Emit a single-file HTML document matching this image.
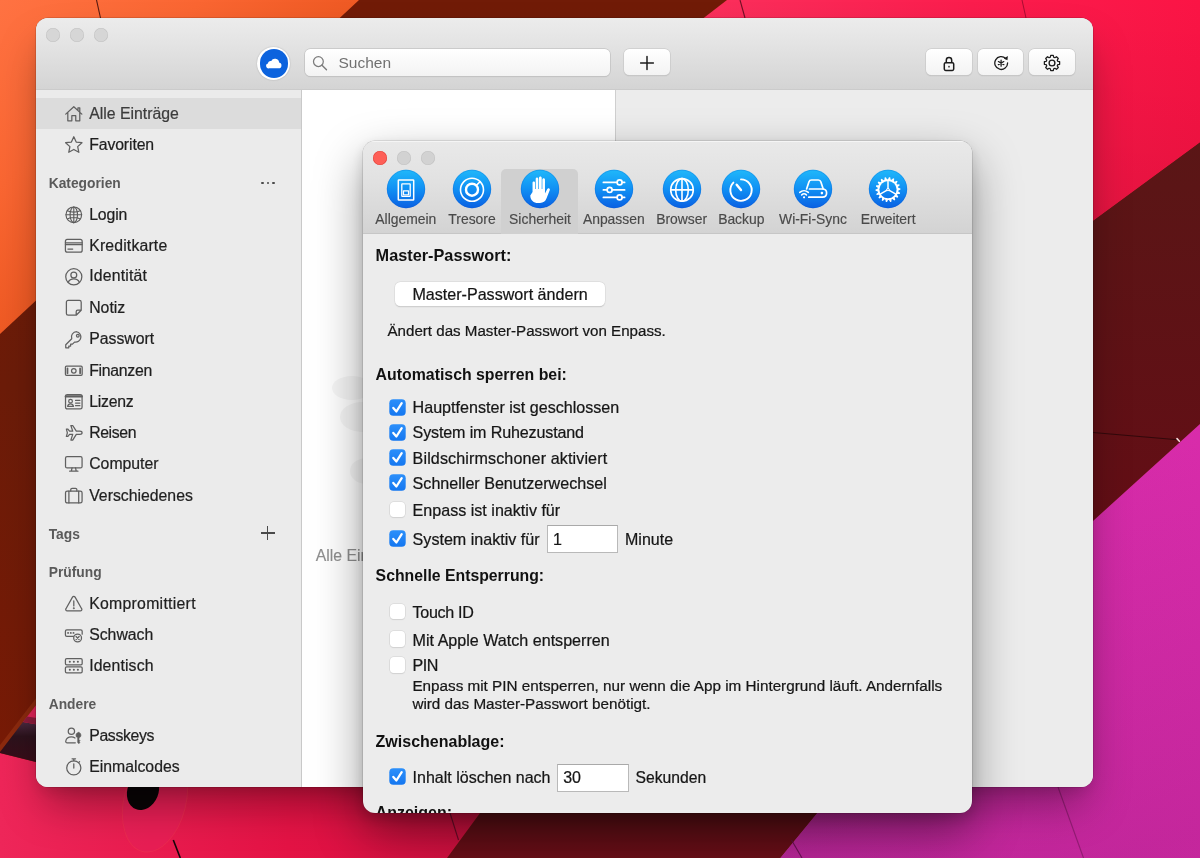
<!DOCTYPE html>
<html lang="de">
<head>
<meta charset="utf-8">
<title>Enpass – Einstellungen</title>
<style>
*{box-sizing:border-box;margin:0;padding:0}
html,body{width:1200px;height:858px;overflow:hidden;background:#6e1b09}
body{font-family:"Liberation Sans",sans-serif;position:relative;color:#1d1d1d;-webkit-font-smoothing:antialiased}
#main,#dlg{will-change:transform}
#wall{position:absolute;left:0;top:0;width:1200px;height:858px;display:block}
.abs{position:absolute}
/* ---------- main window ---------- */
#main{position:absolute;left:36px;top:18px;width:1057px;height:769px;border-radius:12px;background:#ececec;
 box-shadow:0 0 0 0.5px rgba(0,0,0,.24),0 24px 44px -8px rgba(0,0,0,.36),0 8px 16px -4px rgba(0,0,0,.12);overflow:hidden}
#main .tbar{position:absolute;left:0;top:0;width:100%;height:72px;background:linear-gradient(#ececec,#e4e4e4 35%,#d4d4d4);border-bottom:1px solid #cbcbcb}
.tl{position:absolute;width:14.4px;height:14.4px;border-radius:50%;background:#d6d6d6;box-shadow:inset 0 0 0 .5px #c2c2c2}
#side{position:absolute;left:0;top:72px;width:264.5px;height:700px;background:#ebebeb}
#list{position:absolute;left:265.5px;top:72px;width:313.5px;height:700px;background:#fff}
#vsep1{position:absolute;left:264.5px;top:72px;width:1px;height:700px;background:#c9c9c9}
#vsep2{position:absolute;left:579px;top:72px;width:1px;height:700px;background:#cfcfcf}
#detail{position:absolute;left:580px;top:72px;width:477px;height:700px;background:#ececec}


/* main toolbar widgets */
.cloud{position:absolute;left:221.4px;top:29.2px;width:33px;height:33px;border-radius:50%;background:#fff;box-shadow:0 0 1.5px rgba(0,0,0,.25)}
.cloud:before{content:"";position:absolute;left:2.3px;top:2.3px;width:28.4px;height:28.4px;border-radius:50%;background:#0c63de}
.cloud svg{position:absolute;left:0;top:0;width:33px;height:33px}
.search{position:absolute;left:268.6px;top:30.5px;width:305.4px;height:27.7px;border-radius:5.5px;background:linear-gradient(#ffffff,#f3f3f3);box-shadow:0 0 0 .8px #c4c4c4,0 1px 1px rgba(0,0,0,.12)}
.search svg{position:absolute;left:7.5px;top:6.5px;width:17px;height:17px}
.search span{position:absolute;left:33.9px;top:.6px;line-height:27.6px;font-size:15.5px;color:#707070}
.tbtn{position:absolute;top:30.8px;height:26.7px;width:45.6px;border-radius:5.5px;background:linear-gradient(#ffffff,#f3f3f3);box-shadow:0 0 0 .7px #cbcbcb,0 1px 1.2px rgba(0,0,0,.16)}
.tbtn svg{position:absolute;left:50%;top:50%;width:20px;height:20px;margin:-9.100px 0 0 -10px;overflow:visible}

.ph{position:absolute;border-radius:50%;background:#f6f6f6}
.emp{position:absolute;left:14.2px;top:456px;height:20px;line-height:20px;font-size:15.8px;color:#8f8f8f;white-space:nowrap;-webkit-text-stroke:.15px #8f8f8f}
/* sidebar rows */
.row{position:absolute;left:0;width:264.5px;height:31px;line-height:31px;font-size:15.8px;color:#1f1f1f;white-space:nowrap;-webkit-text-stroke:.22px #1f1f1f}
.row.sel{background:#dcdcdc;color:#3c3c3c;-webkit-text-stroke-color:#3c3c3c}
.row .ic{position:absolute;left:27.9px;top:6.1px;width:19.6px;height:19.6px;overflow:visible}
.row span{position:absolute;left:53.2px;top:.7px}
.hdr{position:absolute;left:12.7px;width:240px;height:20px;line-height:20px;font-size:13.8px;font-weight:bold;color:#5a5a5a;white-space:nowrap}
.dots{position:absolute;left:212.5px;top:7.5px;width:16px;height:3px}
.dots b{display:block;position:absolute;top:0;width:2.6px;height:2.6px;border-radius:50%;background:#4a4a4a}
.dots b:nth-child(1){left:0}.dots b:nth-child(2){left:5.4px}.dots b:nth-child(3){left:10.8px}
.plus{position:absolute;left:212px;top:.9px;width:14px;height:14px}
.plus:before{content:"";position:absolute;left:0;top:6.4px;width:14px;height:1.2px;background:#4a4a4a}
.plus:after{content:"";position:absolute;left:6.4px;top:0;width:1.2px;height:14px;background:#4a4a4a}
/* ---------- dialog ---------- */
#dlg{position:absolute;left:363px;top:141px;width:609px;height:672px;border-radius:12px;background:#ececec;
 box-shadow:0 0 0 0.5px rgba(0,0,0,.2),0 20px 48px rgba(0,0,0,.40),0 5px 14px rgba(0,0,0,.14);overflow:hidden}
#dlg .tbar{position:absolute;left:0;top:0;width:100%;height:93px;background:linear-gradient(#e9e9e9,#e2e2e2 40%,#d3d3d3);border-bottom:1px solid #c6c6c6;box-shadow:inset 0 1px 0 rgba(255,255,255,.55)}

.tabsel{position:absolute;left:138px;top:28.2px;width:76.6px;height:65.3px;background:#d0d0d0;border-radius:5px 5px 0 0}
.dtl{position:absolute;top:9.5px;width:14px;height:14px;border-radius:50%}
.tic{position:absolute;top:28.4px;width:40px;height:40px;overflow:visible}
.tlab{position:absolute;top:69.9px;width:100px;height:16px;line-height:16px;text-align:center;font-size:13.9px;color:#4a4a4a;white-space:nowrap;-webkit-text-stroke:.15px #4a4a4a}
.h{position:absolute;left:12.6px;height:20px;line-height:20px;font-weight:bold;color:#111;white-space:nowrap}
.t{position:absolute;height:20px;line-height:20px;color:#161616;white-space:nowrap;-webkit-text-stroke:.22px #161616}
.cb{position:absolute;left:26px;width:17px;height:17px}
.cbo{position:absolute;left:26.6px;width:15.8px;height:15.8px;border-radius:3.8px;background:#fff;box-shadow:0 0 0 .6px #d3d3d3,0 .5px 1px rgba(0,0,0,.12)}
.btn{position:absolute;border-radius:5.5px;background:#fff;box-shadow:0 0 0 .5px #d9d9d9,0 .6px 1.2px rgba(0,0,0,.2)}
.inp{position:absolute;background:#fff;border:1px solid #b9b9b9;border-top-color:#a9a9a9}
</style>
</head>
<body>
<svg id="wall" viewBox="0 0 1200 858" preserveAspectRatio="none">
 <defs>
  <linearGradient id="gOr" x1="0" y1="0" x2="1" y2="1" gradientUnits="objectBoundingBox">
   <stop offset="0" stop-color="#ff7242"/><stop offset=".28" stop-color="#fa6632"/><stop offset=".5" stop-color="#ef5a24"/><stop offset="1" stop-color="#e8521e"/>
  </linearGradient>
  <linearGradient id="gBr" x1="0" y1="0" x2="0" y2="1">
   <stop offset="0" stop-color="#711b07"/><stop offset=".45" stop-color="#6c1c09"/><stop offset="1" stop-color="#7b1a05"/>
  </linearGradient>
  <linearGradient id="gPk" x1="0" y1="0" x2="1" y2="0">
   <stop offset="0" stop-color="#fb305d"/><stop offset=".55" stop-color="#fb1d4d"/><stop offset="1" stop-color="#fb1445"/>
  </linearGradient>
  <linearGradient id="gMr" x1="0" y1="0" x2="0" y2="1">
   <stop offset="0" stop-color="#5a1616"/><stop offset="1" stop-color="#650c15"/>
  </linearGradient>
  <linearGradient id="gMg" x1="0" y1="0" x2="1" y2="0">
   <stop offset="0" stop-color="#c32aa0"/><stop offset=".5" stop-color="#d22ba6"/><stop offset="1" stop-color="#d92cab"/>
  </linearGradient>
  <linearGradient id="gBm" x1="0" y1="0" x2="0" y2="1">
   <stop offset="0" stop-color="#4c0f11"/><stop offset="1" stop-color="#6a0f18"/>
  </linearGradient>
  <linearGradient id="gBp" x1="0" y1="0" x2="1" y2="0">
   <stop offset="0" stop-color="#ee2659"/><stop offset=".6" stop-color="#e41345"/><stop offset="1" stop-color="#d01040"/>
  </linearGradient>
  <linearGradient id="gIc" x1="0" y1="0" x2="0" y2="1"><stop offset="0" stop-color="#20b8fa"/><stop offset=".5" stop-color="#1090f4"/><stop offset="1" stop-color="#0a60e2"/></linearGradient>
  <linearGradient id="gCb" x1="0" y1="0" x2="0" y2="1"><stop offset="0" stop-color="#2c8ffa"/><stop offset="1" stop-color="#1577f0"/></linearGradient>
  <linearGradient id="gDk" x1="0" y1="0" x2="0" y2="1"><stop offset="0" stop-color="#4a2a40"/><stop offset=".35" stop-color="#2c121c"/><stop offset="1" stop-color="#3a0c18"/></linearGradient>
  <linearGradient id="gIc2" x1="0" y1="0" x2="0" y2="1"><stop offset="0" stop-color="#18a3f6"/><stop offset=".6" stop-color="#0f88f2"/><stop offset="1" stop-color="#0d74ea"/></linearGradient>
  <linearGradient id="gPkV" gradientUnits="userSpaceOnUse" x1="0" y1="0" x2="0" y2="230"><stop offset="0" stop-color="#70001a" stop-opacity="0"/><stop offset="1" stop-color="#70001a" stop-opacity=".17"/></linearGradient>
  <linearGradient id="gMgV" gradientUnits="userSpaceOnUse" x1="1000" y1="480" x2="1120" y2="858"><stop offset="0" stop-color="#5a0a50" stop-opacity="0"/><stop offset="1" stop-color="#5a0a50" stop-opacity=".16"/></linearGradient>
 </defs>
 <rect width="1200" height="858" fill="url(#gBr)"/>
 <!-- orange -->
 <polygon points="0,0 359,0 0,334" fill="url(#gOr)"/>
 <!-- top pink -->
 <polygon points="727,0 1200,0 1200,142.5 1093,221 900,300 690,28.6" fill="url(#gPk)"/>
 <polygon points="727,0 1200,0 1200,142.5 1093,221 900,300 690,28.6" fill="url(#gPkV)"/>
 <!-- right maroon -->
 <polygon points="1093,221 1200,142.5 1200,424 1093,521 1000,600 1000,300" fill="url(#gMr)"/>
 <!-- magenta -->
 <polygon points="1200,424 1200,858 780,858 817,813 900,700 1093,521" fill="url(#gMg)"/>
 <polygon points="1200,424 1200,858 780,858 817,813 900,700 1093,521" fill="url(#gMgV)"/>
 <!-- bottom maroon -->
 <polygon points="480,813 447,858 780,858 817,813 850,770 500,770" fill="url(#gBm)"/>
 <!-- bottom-left pink -->
 <polygon points="0,753 40,763 40,780 480,780 480,813 447,858 0,858" fill="url(#gBp)"/>
 <!-- left band details -->
 <polygon points="0,745 40,693 40,700 0,752.500" fill="#8c2a0e"/>
 <polygon points="0,752 23,722 40,725 40,763 0,753" fill="url(#gDk)"/>
 <polygon points="40,700 40,725 23,722" fill="#e3245a"/>
 <polygon points="27,716.500 40,718.500 40,725 23,722" fill="#8e1c3c"/>
 <!-- disc + hole -->
 <ellipse cx="155" cy="801" rx="31" ry="52" transform="rotate(14 155 801)" fill="#e6205a" fill-opacity=".55" stroke="#f0364f" stroke-opacity=".5" stroke-width="1"/>
 <ellipse cx="143" cy="791" rx="15.500" ry="19.500" transform="rotate(22 143 791)" fill="#0a0406"/>
 <path d="M173.300 840 180.300 858" stroke="#16070a" stroke-width="1.600"/>
 <!-- seams -->
 <g stroke="#3a0d0a" stroke-width="1.100" fill="none" stroke-opacity=".85">
  <path d="M96.500 0 100.500 18"/><path d="M740 0 745 18" stroke="#5a0a1c"/><path d="M1022 0 1026 18" stroke="#8f0a2c" stroke-width=".9"/>
  <path d="M1090 432.200 1177.500 439.700" stroke="#2a0709"/>
  <path d="M450 813 458.500 840" stroke="#5a0a22"/><path d="M791.500 840 802 858" stroke="#5e0f4a"/><path d="M1058 787 1083.500 858" stroke="#8a1a6c"/>
 </g>
 <path d="M1177 438.600 1179.400 441.200" stroke="#f3d9dc" stroke-width="1.600" stroke-linecap="round"/>
</svg>

<div id="main">
 <div class="tbar"></div>
 <div class="tl" style="left:9.6px;top:10px"></div>
 <div class="tl" style="left:33.7px;top:10px"></div>
 <div class="tl" style="left:57.6px;top:10px"></div>

 <div class="cloud"><svg viewBox="0 0 33 33"><path fill="#fff" d="M12.300 21.300h9.300a2.900 2.900 0 0 0 .5-5.750 4.150 4.150 0 0 0-7.900-1.450 2.700 2.700 0 0 0-3.300 2.500 2.450 2.450 0 0 0 1.400 4.700z"/></svg></div>
 <div class="search"><svg viewBox="0 0 17 17"><circle cx="6.400" cy="6.600" r="4.900" fill="none" stroke="#7b7b7b" stroke-width="1.250"/><path d="M10 10.200l4.500 4.500" stroke="#7b7b7b" stroke-width="1.350" stroke-linecap="round"/></svg><span>Suchen</span></div>
 <div class="tbtn" style="left:588.4px"><svg viewBox="0 0 20 20"><path d="M10 3.600v12.800M3.600 10h12.800" stroke="#1c1c1c" stroke-width="1.500" stroke-linecap="round"/></svg></div>
 <div class="tbtn" style="left:890.2px"><svg viewBox="0 0 20 20"><g fill="none" stroke="#1c1c1c" stroke-width="1.500" stroke-linejoin="round"><rect x="5.300" y="9.700" width="9.400" height="7.700" rx="1.300"/><path d="M7.300 9.700V7.200a2.700 2.700 0 0 1 5.400 0v2.500"/></g><rect x="9.300" y="12.700" width="1.400" height="1.900" rx=".5" fill="#1c1c1c"/></svg></div>
 <div class="tbtn" style="left:941.9px"><svg viewBox="0 0 20 20"><g fill="none" stroke="#1c1c1c" stroke-width="1.300" stroke-linecap="round"><path d="M14.700 5.500A6.400 6.400 0 1 0 16.600 10"/><path d="M10.100 7v6.200M7.400 8.550l5.400 3.100M12.800 8.550l-5.400 3.100" stroke-width="1.250"/></g><path d="M16.900 3.100l-.500 4.100-3.600-1.700z" fill="#1c1c1c"/></svg></div>
 <div class="tbtn" style="left:993.4px"><svg viewBox="0 0 20 20"><g fill="none" stroke="#1c1c1c" stroke-width="1.350" stroke-linejoin="round"><path d="M8.600 2.400h2.800l.45 2.050 1.250.52 1.780-1.130 1.980 1.980-1.130 1.780.52 1.250 2.050.45v2.800l-2.050.45-.52 1.250 1.130 1.780-1.980 1.980-1.780-1.130-1.250.52-.45 2.050H8.600l-.45-2.050-1.250-.52-1.780 1.130-1.980-1.980 1.130-1.780-.52-1.250-2.050-.45V9.300l2.050-.45.52-1.250-1.130-1.780 1.980-1.980 1.780 1.130 1.250-.52z" transform="translate(10 10) scale(.92) translate(-10 -10.700)"/><circle cx="10" cy="10" r="2.900"/></g></svg></div>
 <div id="side"></div>
<!-- sidebar rows -->
<div class="row sel" style="top:79.9px"><svg class="ic" viewBox="0 0 18 18"><path stroke="#606060" stroke-width="1.15" fill="none" stroke-linecap="round" stroke-linejoin="round" d="M1.6 9.3 9 2.5l7.400 6.800M3.500 7.700v7.700h3.700v-4.700h3.600v4.700h3.700V7.700M12.800 5.900V3.500h1.700v4"/></svg><span style="top:-0.3px">Alle Einträge</span></div>
<div class="row" style="top:110.7px"><svg class="ic" viewBox="0 0 18 18"><path stroke="#606060" stroke-width="1.15" fill="none" stroke-linecap="round" stroke-linejoin="round" d="M9.00 1.60 11.20 6.47 16.51 7.06 12.57 10.66 13.64 15.89 9.00 13.25 4.36 15.89 5.43 10.66 1.49 7.06 6.80 6.47z"/></svg><span style="letter-spacing:-0.11px">Favoriten</span></div>
<div class="hdr" style="top:156.1px">Kategorien<i class="dots"><b></b><b></b><b></b></i></div>
<div class="row" style="top:180.7px"><svg class="ic" viewBox="0 0 18 18"><g stroke="#5c5c5c" stroke-width="1.05" fill="none" stroke-linecap="round" stroke-linejoin="round"><circle cx="9" cy="9" r="7.2"/><ellipse cx="9" cy="9" rx="3.4" ry="7.2"/><path d="M1.8 9h14.4M9 1.8v14.4M3.100 5.200c1.700.9 3.700 1.300 5.900 1.300s4.200-.4 5.900-1.300M3.100 12.800c1.700-.9 3.700-1.300 5.900-1.300s4.200.4 5.900 1.300"/></g></svg><span style="letter-spacing:-0.13px">Login</span></div>
<div class="row" style="top:211.8px"><svg class="ic" viewBox="0 0 18 18"><g stroke="#606060" stroke-width="1.15" fill="none" stroke-linecap="round" stroke-linejoin="round"><rect x="1.300" y="3.200" width="15.400" height="11.600" rx="1.800"/><path d="M1.300 6.300h15.400M1.300 7.900h15.400M3.600 12h4.400"/></g></svg><span style="letter-spacing:0.16px">Kreditkarte</span></div>
<div class="row" style="top:242.9px"><svg class="ic" viewBox="0 0 18 18"><g stroke="#606060" stroke-width="1.15" fill="none" stroke-linecap="round" stroke-linejoin="round"><circle cx="9" cy="9" r="7.400"/><circle cx="9" cy="7.300" r="2.700"/><path d="M3.900 14.100c.900-2.100 2.800-3.100 5.100-3.100s4.200 1 5.100 3.100"/></g></svg><span style="letter-spacing:0.19px;top:-1.3px">Identität</span></div>
<div class="row" style="top:274.3px"><svg class="ic" viewBox="0 0 18 18"><path stroke="#606060" stroke-width="1.15" fill="none" stroke-linecap="round" stroke-linejoin="round" d="M3.800 2.200h10.400a1.600 1.600 0 0 1 1.600 1.600v7.400l-4.600 4.600H3.800a1.600 1.600 0 0 1-1.600-1.600V3.800a1.600 1.600 0 0 1 1.600-1.600zM15.600 11.200h-3a1.400 1.400 0 0 0-1.400 1.400v3"/></svg><span style="top:-0.3px">Notiz</span></div>
<div class="row" style="top:305.5px"><svg class="ic" viewBox="0 0 18 18"><g stroke="#606060" stroke-width="1.15" fill="none" stroke-linecap="round" stroke-linejoin="round"><path d="M11.600 1.600a4.800 4.800 0 0 0-4.500 6.500L1.600 13.600v2.800h2.800v-1.700h1.700v-1.700h1.700l1.900-1.900a4.800 4.800 0 1 0 1.900-9.500z"/><circle cx="12.700" cy="5.300" r="1.250"/></g></svg><span style="top:-0.3px">Passwort</span></div>
<div class="row" style="top:336.7px"><svg class="ic" viewBox="0 0 18 18"><g stroke="#606060" stroke-width="1.15" fill="none" stroke-linecap="round" stroke-linejoin="round"><rect x="1.300" y="4.800" width="15.400" height="8.400" rx="1"/><circle cx="9" cy="9" r="2.100"/><path d="M3.200 6.700v4.600M14.800 6.700v4.600" stroke-width="1.600"/></g></svg><span style="letter-spacing:-0.27px">Finanzen</span></div>
<div class="row" style="top:367.9px"><svg class="ic" viewBox="0 0 18 18"><g stroke="#606060" stroke-width="1.15" fill="none" stroke-linecap="round" stroke-linejoin="round"><rect x="1.400" y="2.400" width="15.200" height="13.200" rx="1.600"/><path d="M1.600 4.100h14.800" stroke-width="2"/><circle cx="6" cy="8.400" r="1.700"/><path d="M3.300 13.200c.3-1.600 1.300-2.300 2.700-2.300s2.400.7 2.700 2.300zM10.600 7.800h4M10.600 10.200h4M10.600 12.600h4"/></g></svg><span style="letter-spacing:-0.23px;top:-0.3px">Lizenz</span></div>
<div class="row" style="top:399.2px"><svg class="ic" viewBox="0 0 18 18"><path stroke="#606060" stroke-width="1.15" fill="none" stroke-linecap="round" stroke-linejoin="round" d="M16.600 9c0 .9-.9 1.500-2.100 1.500h-3.200l-3.300 5.200H6.300l1.700-5.200H5.100l-1.500 1.800H2.200L3.100 9l-.9-3.300h1.400l1.500 1.800H8L6.300 2.300H8l3.300 5.200h3.200c1.200 0 2.100.6 2.100 1.500z"/></svg><span style="letter-spacing:-0.38px;top:-0.3px">Reisen</span></div>
<div class="row" style="top:430.4px"><svg class="ic" viewBox="0 0 18 18"><g stroke="#606060" stroke-width="1.15" fill="none" stroke-linecap="round" stroke-linejoin="round"><rect x="1.400" y="2.400" width="15.200" height="10.400" rx="1.400"/><path d="M7.400 12.800l-.6 2.800M10.600 12.800l.6 2.800M5.200 15.800h7.600"/></g></svg><span style="top:-0.3px">Computer</span></div>
<div class="row" style="top:461.7px"><svg class="ic" viewBox="0 0 18 18"><g stroke="#606060" stroke-width="1.15" fill="none" stroke-linecap="round" stroke-linejoin="round"><rect x="1.400" y="4.600" width="15.200" height="11" rx="1.600"/><path d="M6.200 4.600V3.300c0-.7.500-1.200 1.200-1.200h3.200c.7 0 1.200.5 1.200 1.200v1.300M4.500 4.600v11M13.500 4.600v11"/></g></svg><span>Verschiedenes</span></div>
<div class="hdr" style="top:507.2px">Tags<i class="plus"></i></div>
<div class="hdr" style="top:545.2px">Prüfung</div>
<div class="row" style="top:569.8px"><svg class="ic" viewBox="0 0 18 18"><g stroke="#606060" stroke-width="1.15" fill="none" stroke-linecap="round" stroke-linejoin="round"><path d="M9 2.100c.5 0 .9.300 1.200.8l6 10.600c.6 1-.1 2.100-1.200 2.100H3c-1.100 0-1.800-1.100-1.200-2.100l6-10.600c.3-.5.700-.8 1.200-.8z"/><path d="M9 6.400v4.600"/><circle cx="9" cy="13.100" r=".35" fill="#5c5c5c"/></g></svg><span style="letter-spacing:0.28px">Kompromittiert</span></div>
<div class="row" style="top:600.9px"><svg class="ic" viewBox="0 0 18 18"><g stroke="#606060" stroke-width="1.15" fill="none" stroke-linecap="round" stroke-linejoin="round"><path d="M9.600 10.400H2.600c-.8 0-1.300-.5-1.300-1.300V5.700c0-.8.500-1.300 1.300-1.300h12.800c.8 0 1.300.5 1.300 1.300v2.700"/><circle cx="12.500" cy="12" r="3.600" fill="#ebebeb"/><path d="M11.100 10.600l2.800 2.800M13.900 10.600l-2.800 2.800"/><path d="M3.700 7.300h.1M6.200 7.300h.1M8.700 7.300h.1" stroke-width="1.700"/></g></svg><span style="top:-0.3px">Schwach</span></div>
<div class="row" style="top:632.0px"><svg class="ic" viewBox="0 0 18 18"><g stroke="#606060" stroke-width="1.15" fill="none" stroke-linecap="round" stroke-linejoin="round"><rect x="1.300" y="2.500" width="15.400" height="5.600" rx="1.200"/><rect x="1.300" y="9.900" width="15.400" height="5.600" rx="1.200"/><path d="M5.300 5.300h.1M9 5.300h.1M12.700 5.300h.1M5.300 12.700h.1M9 12.700h.1M12.700 12.700h.1" stroke-width="1.800"/></g></svg><span style="letter-spacing:0.13px;top:-0.3px">Identisch</span></div>
<div class="hdr" style="top:676.7px">Andere</div>
<div class="row" style="top:701.8px"><svg class="ic" viewBox="0 0 18 18"><g stroke="#606060" stroke-width="1.15" fill="none" stroke-linecap="round" stroke-linejoin="round"><circle cx="6.800" cy="4.900" r="2.900"/><path d="M10.400 15.400H2.900c-.9 0-1.400-.6-1.300-1.400.4-2.400 2.400-3.900 5.200-3.900 1.300 0 2.400.3 3.300.9"/><path d="M13.600 5.900a2.600 2.600 0 0 0-1 5v4.300l1 1 1.100-1.100-.8-.8.800-.8-.9-.9v-1.700a2.600 2.600 0 0 0-.2-5z" fill="#5c5c5c" stroke-width=".6"/></g></svg><span style="letter-spacing:-0.34px">Passkeys</span></div>
<div class="row" style="top:732.9px"><svg class="ic" viewBox="0 0 18 18"><g stroke="#606060" stroke-width="1.15" fill="none" stroke-linecap="round" stroke-linejoin="round"><circle cx="9" cy="10" r="6.500"/><path d="M9 6.300v3.900M7.400 1.700h3.200M9 1.700v1.800M14.300 4.300l-.9.900"/></g></svg><span style="top:-0.3px">Einmalcodes</span></div>
<!-- /sidebar rows -->
 <div id="vsep1"></div>
 <div id="list">
  <div class="ph" style="left:30px;top:286px;width:40px;height:24px"></div>
  <div class="ph" style="left:38px;top:312px;width:44px;height:30px"></div>
  <div class="ph" style="left:48px;top:368px;width:34px;height:26px"></div>
  <div class="emp">Alle Einträge</div>
 </div>
 <div id="vsep2"></div>
 <div id="detail"></div>
</div>

<div id="dlg">
<!-- dlg -->
 <div class="tbar"></div>
 <div class="tabsel"></div>
 <div class="dtl" style="left:9.5px;background:#fe5f57;box-shadow:inset 0 0 0 .6px #e2463f"></div>
 <div class="dtl" style="left:33.7px;background:#d2d2d2;box-shadow:inset 0 0 0 .6px #c3c3c3"></div>
 <div class="dtl" style="left:57.7px;background:#d2d2d2;box-shadow:inset 0 0 0 .6px #c3c3c3"></div>
 <svg class="tic" style="left:22.8px" viewBox="0 0 40 40"><circle cx="20" cy="20" r="19.150" fill="url(#gIc)"/><circle cx="20" cy="20" r="18.800" fill="none" stroke="#0a55c8" stroke-opacity=".35" stroke-width=".7"/><g transform="translate(0 1.5)"><g stroke="#fff" fill="none" stroke-linecap="round" stroke-linejoin="round" stroke-width="1.500"><rect x="12.300" y="9.400" width="15.400" height="20.200" rx=".6"/><rect x="15.800" y="13.300" width="8.400" height="12.600" rx=".4" stroke-width="1.300"/><rect x="17.500" y="20.300" width="5" height="4" fill="#fff" fill-opacity=".0" stroke-width="1.200"/></g></g></svg>
 <div class="tlab" style="left:-7.2px">Allgemein</div>
 <svg class="tic" style="left:89.0px" viewBox="0 0 40 40"><circle cx="20" cy="20" r="19.150" fill="url(#gIc)"/><circle cx="20" cy="20" r="18.800" fill="none" stroke="#0a55c8" stroke-opacity=".35" stroke-width=".7"/><g transform="translate(0 0.7)"><g stroke="#fff" fill="none" stroke-linecap="round" stroke-linejoin="round"><circle cx="20" cy="20" r="11.500" stroke-width="1.600"/><circle cx="20" cy="20" r="6" stroke-width="2.400"/><path d="M24.600 15.400l3.400-3.400" stroke-width="1.600"/></g></g></svg>
 <div class="tlab" style="left:59.0px">Tresore</div>
 <svg class="tic" style="left:157.0px" viewBox="0 0 40 40"><circle cx="20" cy="20" r="19.150" fill="url(#gIc)"/><circle cx="20" cy="20" r="18.800" fill="none" stroke="#0a55c8" stroke-opacity=".35" stroke-width=".7"/><g transform="translate(0 1.3)"><path fill="#fff" transform="translate(20 20) scale(1.13) translate(-20.300 -20.300)" d="M13.700 21.900V13.700c0-1.700 2.200-1.700 2.200 0v5.400h.6V10.300c0-1.800 2.300-1.800 2.300 0v8.800h.6V9.400c0-1.800 2.400-1.800 2.400 0v9.700h.6V11c0-1.800 2.300-1.800 2.300 0v12.100l1.900-3.800c.9-1.700 3-0.700 2.300 1l-2.900 7.300c-1 2.500-2.800 3.900-5.700 3.900h-1.800c-3.700 0-6.800-2.500-6.800-6.700z"/></g></svg>
 <div class="tlab" style="left:127.0px">Sicherheit</div>
 <svg class="tic" style="left:230.8px" viewBox="0 0 40 40"><circle cx="20" cy="20" r="19.150" fill="url(#gIc)"/><circle cx="20" cy="20" r="18.800" fill="none" stroke="#0a55c8" stroke-opacity=".35" stroke-width=".7"/><g transform="translate(20 20.9) scale(1.12) translate(-20 -20)"><g stroke="#fff" fill="none" stroke-linecap="round" stroke-linejoin="round" stroke-width="1.500"><path d="M10.500 13.300h12M27.500 13.300h2M10.500 20h3.500M18.600 20h10.900M10.500 26.700h12M27.500 26.700h2"/><circle cx="25" cy="13.300" r="2.200"/><circle cx="16.100" cy="20" r="2.200"/><circle cx="25" cy="26.700" r="2.200"/></g></g></svg>
 <div class="tlab" style="left:200.8px">Anpassen</div>
 <svg class="tic" style="left:298.7px" viewBox="0 0 40 40"><circle cx="20" cy="20" r="19.150" fill="url(#gIc)"/><circle cx="20" cy="20" r="18.800" fill="none" stroke="#0a55c8" stroke-opacity=".35" stroke-width=".7"/><g transform="translate(0 0.9)"><g stroke="#fff" fill="none" stroke-linecap="round" stroke-linejoin="round" stroke-width="1.600"><circle cx="20" cy="20" r="11.300"/><ellipse cx="20" cy="20" rx="6.300" ry="11.300"/><path d="M8.700 20h22.600M20 8.700v22.600"/></g></g></svg>
 <div class="tlab" style="left:268.7px">Browser</div>
 <svg class="tic" style="left:358.3px" viewBox="0 0 40 40"><circle cx="20" cy="20" r="19.150" fill="url(#gIc)"/><circle cx="20" cy="20" r="18.800" fill="none" stroke="#0a55c8" stroke-opacity=".35" stroke-width=".7"/><g transform="translate(0 1.1)"><g stroke="#fff" fill="none" stroke-linecap="round" stroke-linejoin="round" stroke-width="1.900"><path d="M20 9.300A10.700 10.700 0 1 1 12.400 12.500"/><path d="M20 20l-4.300-5.300" stroke-width="2.400"/></g></g></svg>
 <div class="tlab" style="left:328.3px">Backup</div>
 <svg class="tic" style="left:430.0px" viewBox="0 0 40 40"><circle cx="20" cy="20" r="19.150" fill="url(#gIc)"/><circle cx="20" cy="20" r="18.800" fill="none" stroke="#0a55c8" stroke-opacity=".35" stroke-width=".7"/><g transform="translate(0 0.6)"><g stroke="#fff" fill="none" stroke-linecap="round" stroke-linejoin="round" stroke-width="1.700"><path d="M13.600 19.400l2.300-7.100c.4-1.300 1.300-1.900 2.600-1.900h6.800c1.300 0 2.200.6 2.600 1.900l2.300 7.100"/><path d="M16.500 19.400h12.900c2.500 0 4.200 1.700 4.200 4.100s-1.700 4.100-4.200 4.100H15.800"/><path d="M6.800 22.800c2.500-2.300 6-2.300 8.500 0M8.700 25.300c1.400-1.300 3.300-1.300 4.700 0" stroke-width="1.500"/></g><circle cx="11.050" cy="27.700" r="1.100" fill="#fff"/><circle cx="28.900" cy="23.500" r="1.300" fill="#fff"/></g></svg>
 <div class="tlab" style="left:400.0px">Wi-Fi-Sync</div>
 <svg class="tic" style="left:505.2px" viewBox="0 0 40 40"><circle cx="20" cy="20" r="19.150" fill="url(#gIc)"/><circle cx="20" cy="20" r="18.800" fill="none" stroke="#0a55c8" stroke-opacity=".35" stroke-width=".7"/><g transform="translate(0 0.6)"><path d="M20.00 9.60 20.96 7.54 22.17 7.69 22.59 9.93 23.56 10.23 25.16 8.62 26.25 9.17 25.88 11.42 26.68 12.03 28.75 11.07 29.58 11.97 28.46 13.95 29.01 14.80 31.27 14.60 31.75 15.72 30.02 17.20 30.24 18.19 32.44 18.78 32.50 20.00 30.37 20.80 30.24 21.81 32.11 23.11 31.75 24.28 29.47 24.30 29.01 25.20 30.31 27.06 29.58 28.03 27.43 27.28 26.68 27.97 27.28 30.16 26.25 30.83 24.49 29.38 23.56 29.77 23.36 32.04 22.17 32.31 21.01 30.35 20.00 30.40 19.04 32.46 17.83 32.31 17.41 30.07 16.44 29.77 14.84 31.38 13.75 30.83 14.12 28.58 13.32 27.97 11.25 28.93 10.42 28.03 11.54 26.05 10.99 25.20 8.73 25.40 8.25 24.28 9.98 22.80 9.76 21.81 7.56 21.22 7.50 20.00 9.63 19.20 9.76 18.19 7.89 16.89 8.25 15.72 10.53 15.70 10.99 14.80 9.69 12.94 10.42 11.97 12.57 12.72 13.32 12.03 12.72 9.84 13.75 9.17 15.51 10.62 16.44 10.23 16.64 7.96 17.83 7.69 18.99 9.65z" fill="#fff"/><circle cx="20" cy="20" r="8.600" fill="url(#gIc2)"/><g stroke="#fff" fill="none" stroke-linecap="round"><path d="M20 20V11.400M20 20l7.450 4.300M20 20l-7.450 4.300" stroke-width="1.500"/></g><circle cx="20" cy="20" r="1.700" fill="#fff"/><circle cx="20" cy="20" r=".7" fill="#1385f0"/></g></svg>
 <div class="tlab" style="left:475.2px">Erweitert</div>
 <div class="h" style="top:104.2px;font-size:16.3px">Master-Passwort:</div>
 <div class="btn" style="left:32px;top:140.7px;width:210px;height:24.200px"></div>
 <div class="t" style="left:49.4px;top:142.9px;font-size:16.1px">Master-Passwort ändern</div>
 <div class="t" style="left:24.5px;top:179.9px;font-size:15.14px">Ändert das Master-Passwort von Enpass.</div>
 <div class="h" style="top:223.7px;font-size:15.87px">Automatisch sperren bei:</div>
 <svg class="cb" style="top:257.8px" viewBox="0 0 17 17"><rect x=".3" y=".3" width="16.400" height="16.400" rx="4" fill="url(#gCb)"/><path d="M4.300 8.900l3.100 3.600 5.300-8.300" fill="none" stroke="#fff" stroke-width="2.250" stroke-linecap="round" stroke-linejoin="round"/></svg>
 <div class="t" style="left:49.6px;top:256.3px;font-size:16.1px">Hauptfenster ist geschlossen</div>
 <svg class="cb" style="top:283.1px" viewBox="0 0 17 17"><rect x=".3" y=".3" width="16.400" height="16.400" rx="4" fill="url(#gCb)"/><path d="M4.300 8.900l3.100 3.600 5.300-8.300" fill="none" stroke="#fff" stroke-width="2.250" stroke-linecap="round" stroke-linejoin="round"/></svg>
 <div class="t" style="left:49.6px;top:281.4px;font-size:16.1px;letter-spacing:-0.15px">System im Ruhezustand</div>
 <svg class="cb" style="top:308.3px" viewBox="0 0 17 17"><rect x=".3" y=".3" width="16.400" height="16.400" rx="4" fill="url(#gCb)"/><path d="M4.300 8.900l3.100 3.600 5.300-8.300" fill="none" stroke="#fff" stroke-width="2.250" stroke-linecap="round" stroke-linejoin="round"/></svg>
 <div class="t" style="left:49.6px;top:307.0px;font-size:16.1px;letter-spacing:0.12px">Bildschirmschoner aktiviert</div>
 <svg class="cb" style="top:333.3px" viewBox="0 0 17 17"><rect x=".3" y=".3" width="16.400" height="16.400" rx="4" fill="url(#gCb)"/><path d="M4.300 8.900l3.100 3.600 5.300-8.300" fill="none" stroke="#fff" stroke-width="2.250" stroke-linecap="round" stroke-linejoin="round"/></svg>
 <div class="t" style="left:49.6px;top:332.4px;font-size:16.1px">Schneller Benutzerwechsel</div>
 <div class="cbo" style="top:360.6px"></div>
 <div class="t" style="left:49.6px;top:359.1px;font-size:16.1px">Enpass ist inaktiv für</div>
 <svg class="cb" style="top:389.2px" viewBox="0 0 17 17"><rect x=".3" y=".3" width="16.400" height="16.400" rx="4" fill="url(#gCb)"/><path d="M4.300 8.900l3.100 3.600 5.300-8.300" fill="none" stroke="#fff" stroke-width="2.250" stroke-linecap="round" stroke-linejoin="round"/></svg>
 <div class="t" style="left:49.6px;top:388.1px;font-size:16.1px">System inaktiv für</div>
 <div class="inp" style="left:184px;top:384.4px;width:71.400px;height:28.100px"></div>
 <div class="t" style="left:189.9px;top:389.1px;font-size:16px">1</div>
 <div class="t" style="left:262.0px;top:389.1px;font-size:16px">Minute</div>
 <div class="h" style="top:425.4px;font-size:15.8px">Schnelle Entsperrung:</div>
 <div class="cbo" style="top:462.5px"></div>
 <div class="t" style="left:49.6px;top:461.1px;font-size:16.1px;letter-spacing:-0.33px">Touch ID</div>
 <div class="cbo" style="top:490.0px"></div>
 <div class="t" style="left:49.6px;top:488.9px;font-size:16.1px">Mit Apple Watch entsperren</div>
 <div class="cbo" style="top:515.8px"></div>
 <div class="t" style="left:49.6px;top:514.2px;font-size:16.1px;letter-spacing:-0.55px">PIN</div>
 <div class="t" style="left:49.4px;top:535.2px;font-size:15.25px">Enpass mit PIN entsperren, nur wenn die App im Hintergrund läuft. Andernfalls</div>
 <div class="t" style="left:49.4px;top:553.2px;font-size:15.25px">wird das Master-Passwort benötigt.</div>
 <div class="h" style="top:590.9px;font-size:16px">Zwischenablage:</div>
 <svg class="cb" style="top:626.8px" viewBox="0 0 17 17"><rect x=".3" y=".3" width="16.400" height="16.400" rx="4" fill="url(#gCb)"/><path d="M4.300 8.900l3.100 3.600 5.300-8.300" fill="none" stroke="#fff" stroke-width="2.250" stroke-linecap="round" stroke-linejoin="round"/></svg>
 <div class="t" style="left:49.6px;top:626.9px;font-size:16px">Inhalt löschen nach</div>
 <div class="inp" style="left:194px;top:623px;width:71.500px;height:27.500px"></div>
 <div class="t" style="left:200.2px;top:626.9px;font-size:16px">30</div>
 <div class="t" style="left:272.5px;top:627.0px;font-size:15.7px">Sekunden</div>
 <div class="h" style="top:661.9px;font-size:16px">Anzeigen:</div>
<!-- /dlg -->
</div>
</body>
</html>
